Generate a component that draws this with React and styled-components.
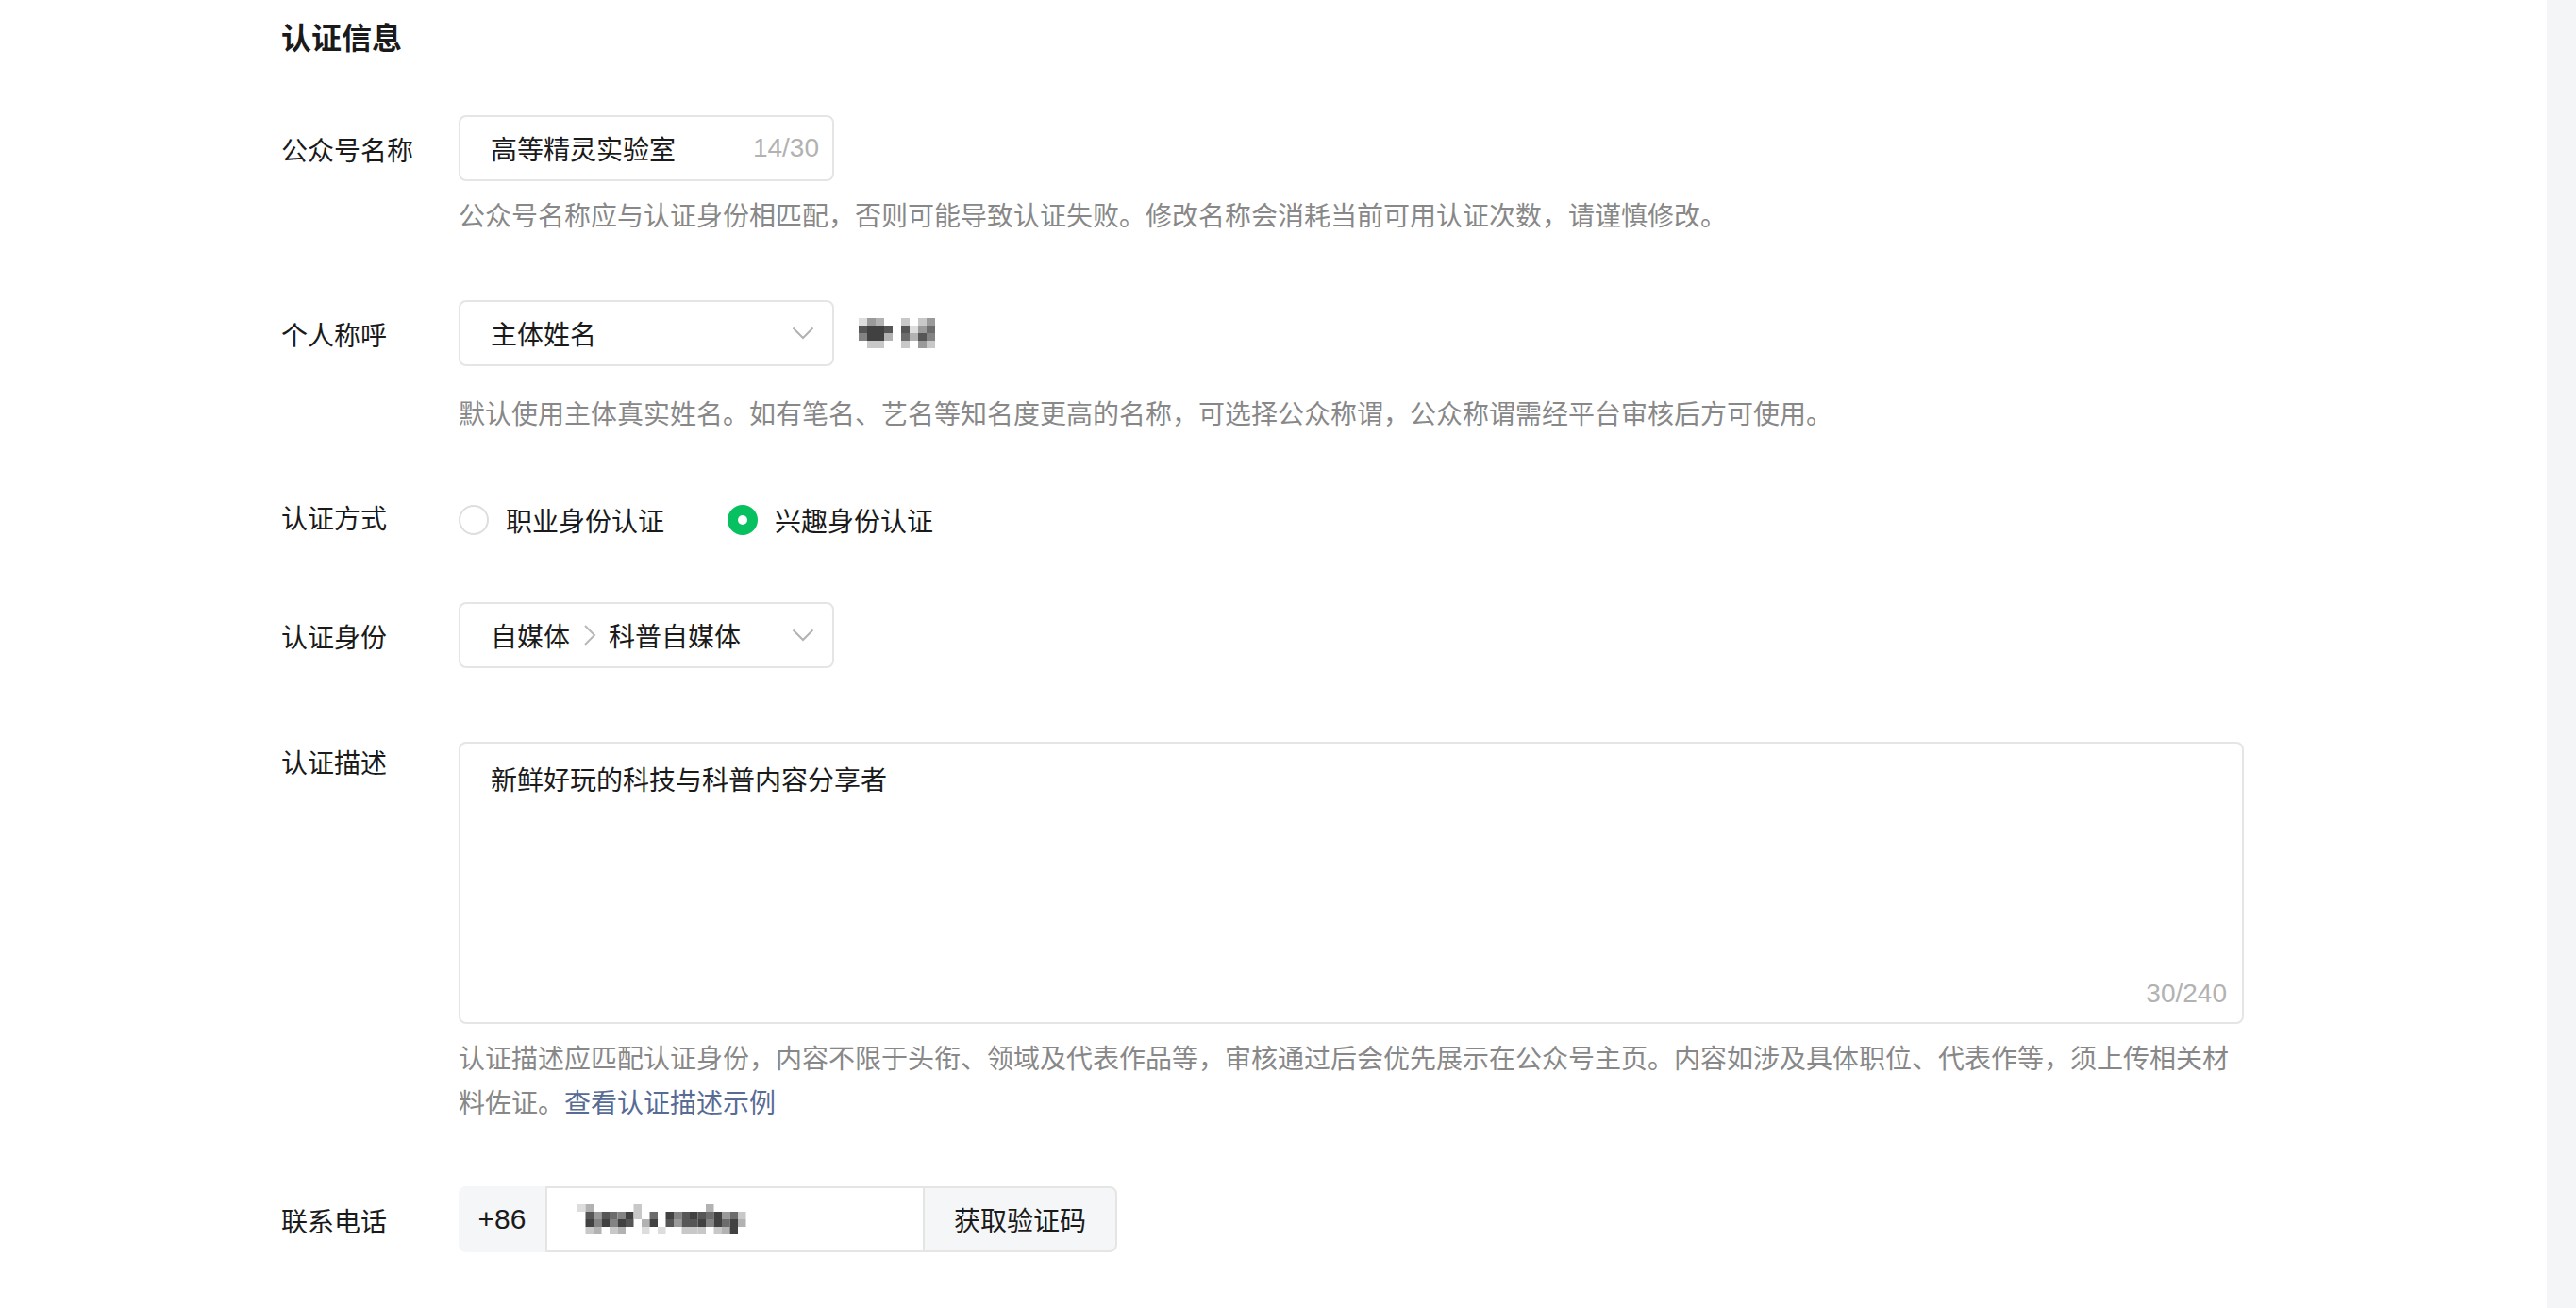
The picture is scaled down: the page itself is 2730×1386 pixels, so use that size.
import React from 'react';
import styled, { createGlobalStyle } from 'styled-components';

const GlobalStyle = createGlobalStyle`
  html, body {
    margin: 0;
    padding: 0;
    background: #fff;
  }
  body {
    font-family: "Liberation Sans", "Noto Sans CJK SC", sans-serif;
    color: #1a1a1a;
  }
  * {
    box-sizing: border-box;
  }
`;

const Shell = styled.div`
  display: flex;
  min-height: 100vh;
`;

const Main = styled.main`
  flex: 1;
  padding: 17px 0 40px 298px;
`;

const SideRail = styled.aside`
  width: 31px;
  background: #f4f5f7;
`;

const Title = styled.h2`
  margin: 0;
  font-size: 32px;
  line-height: 48px;
  font-weight: 700;
  color: #1a1a1a;
`;

const Row = styled.div`
  display: grid;
  grid-template-columns: 188px 1fr;
  align-items: start;
  margin-top: ${({ $gap }) => $gap}px;
`;

const Label = styled.div`
  font-size: 28px;
  line-height: ${({ $lh }) => $lh || 70}px;
  padding-top: ${({ $pt }) => ($pt === undefined ? 4 : $pt)}px;
  color: #1a1a1a;
  white-space: nowrap;
`;

const Field = styled.div`
  display: flex;
  flex-direction: column;
  align-items: flex-start;
`;

const Inline = styled.div`
  display: flex;
  align-items: center;
`;

const Hint = styled.p`
  margin: ${({ $mt }) => $mt}px 0 0;
  max-width: 1880px;
  font-size: 28px;
  line-height: 47px;
  color: #888;
`;

const HintLink = styled.a`
  color: #576b95;
  text-decoration: none;
  cursor: pointer;
`;

const InputBox = styled.div`
  display: flex;
  align-items: center;
  justify-content: space-between;
  width: 398px;
  height: 70px;
  padding: 0 ${({ $pr }) => $pr || 14}px 0 32px;
  border: 2px solid #e5e5e5;
  border-radius: 8px;
  background: #fff;
  font-size: 28px;
  color: #1a1a1a;
`;

const Counter = styled.span`
  font-size: 28px;
  line-height: 32px;
  color: #b2b2b2;
`;

const SelectValue = styled.span`
  display: flex;
  align-items: center;
`;

const Crumb = styled.svg`
  margin: 0 13px 0 14px;
`;

const RadioGroup = styled.div`
  display: flex;
  align-items: center;
  gap: 67px;
  height: 70px;
`;

const RadioOption = styled.label`
  display: flex;
  align-items: center;
  gap: 18px;
  font-size: 28px;
  color: #1a1a1a;
  cursor: pointer;
`;

const RadioDot = styled.span`
  display: flex;
  align-items: center;
  justify-content: center;
  width: 32px;
  height: 32px;
  border-radius: 50%;
  border: 2px solid ${({ $on }) => ($on ? '#07c160' : '#dedede')};
  background: ${({ $on }) => ($on ? '#07c160' : '#fff')};

  &::after {
    content: '';
    display: ${({ $on }) => ($on ? 'block' : 'none')};
    width: 10px;
    height: 10px;
    border-radius: 50%;
    background: #fff;
  }
`;

const TextArea = styled.div`
  display: flex;
  flex-direction: column;
  width: 1892px;
  height: 299px;
  padding: 19px 16px 14px 32px;
  border: 2px solid #e5e5e5;
  border-radius: 8px;
  background: #fff;
`;

const AreaText = styled.div`
  flex: 1;
  font-size: 28px;
  line-height: 42px;
  color: #1a1a1a;
`;

const AreaCounter = styled(Counter)`
  align-self: flex-end;
`;

const PhoneGroup = styled.div`
  display: flex;
  height: 70px;
`;

const Prefix = styled.div`
  display: flex;
  align-items: center;
  justify-content: center;
  width: 92px;
  background: #f5f6f7;
  border-radius: 8px 0 0 8px;
  font-size: 30px;
  color: #1a1a1a;
`;

const PhoneInput = styled.div`
  display: flex;
  align-items: center;
  width: 400px;
  padding-left: 32px;
  border: 2px solid #e5e5e5;
  border-right: none;
  background: #fff;
`;

const CodeButton = styled.button`
  width: 206px;
  padding: 0;
  border: 2px solid #e5e5e5;
  border-radius: 0 8px 8px 0;
  background: #f5f6f7;
  font-family: inherit;
  font-size: 28px;
  color: #1a1a1a;
  cursor: pointer;
`;

const MosaicWrap = styled.svg`
  display: block;
  margin-left: ${({ $ml }) => $ml || 0}px;
`;

const shades = ['none', '#eeeeee', '#dddddd', '#c8c8c8', '#b2b2b2', '#9a9a9a', '#838383', '#6c6c6c', '#565656', '#414141'];

const Mosaic = ({ rows, cw, ch, ml }) => {
  const w = rows[0].length * cw;
  const h = rows.length * ch;
  return (
    <MosaicWrap width={w} height={h} viewBox={`0 0 ${w} ${h}`} $ml={ml}>
      {rows.map((r, y) =>
        r.split('').map((c, x) =>
          c === '0' ? null : (
            <rect key={`${x}-${y}`} x={x * cw} y={y * ch} width={cw} height={ch} fill={shades[+c]} />
          )
        )
      )}
    </MosaicWrap>
  );
};

const Chevron = () => (
  <svg width="24" height="14" viewBox="0 0 24 14">
    <polyline points="1.5,1.5 12,12 22.5,1.5" fill="none" stroke="#b2b2b2" strokeWidth="2" />
  </svg>
);

const nameMosaic = [
  '2540030350',
  '8998082570',
  '6994074860',
  '0330030530',
];
const phoneMosaic = [
  '2400000300000000400000',
  '0858769307096898795730',
  '0969698049085889697940',
  '0340340020200333034900',
];

const App = () => {
  return (
    <Shell>
      <GlobalStyle />
      <Main>
        <Title>认证信息</Title>

        <Row $gap={57}>
          <Label>公众号名称</Label>
          <Field>
            <InputBox>
              <span>高等精灵实验室</span>
              <Counter>14/30</Counter>
            </InputBox>
            <Hint $mt={14}>公众号名称应与认证身份相匹配，否则可能导致认证失败。修改名称会消耗当前可用认证次数，请谨慎修改。</Hint>
          </Field>
        </Row>

        <Row $gap={65}>
          <Label>个人称呼</Label>
          <Field>
            <Inline>
              <InputBox $pr={19}>
                <span>主体姓名</span>
                <Chevron />
              </InputBox>
              <Mosaic rows={nameMosaic} cw={9} ch={8} ml={26} />
            </Inline>
            <Hint $mt={28}>默认使用主体真实姓名。如有笔名、艺名等知名度更高的名称，可选择公众称谓，公众称谓需经平台审核后方可使用。</Hint>
          </Field>
        </Row>

        <Row $gap={53}>
          <Label $pt={0}>认证方式</Label>
          <RadioGroup>
            <RadioOption>
              <RadioDot />
              职业身份认证
            </RadioOption>
            <RadioOption>
              <RadioDot $on />
              兴趣身份认证
            </RadioOption>
          </RadioGroup>
        </Row>

        <Row $gap={52}>
          <Label>认证身份</Label>
          <InputBox $pr={19}>
            <SelectValue>
              自媒体
              <Crumb width="14" height="22" viewBox="0 0 14 22">
                <polyline points="2,1 12,11 2,21" fill="none" stroke="#b8b8b8" strokeWidth="2" />
              </Crumb>
              科普自媒体
            </SelectValue>
            <Chevron />
          </InputBox>
        </Row>

        <Row $gap={74}>
          <Label $lh={40} $pt={4}>认证描述</Label>
          <Field>
            <TextArea>
              <AreaText>新鲜好玩的科技与科普内容分享者</AreaText>
              <AreaCounter>30/240</AreaCounter>
            </TextArea>
            <Hint $mt={14}>
              认证描述应匹配认证身份，内容不限于头衔、领域及代表作品等，审核通过后会优先展示在公众号主页。内容如涉及具体职位、代表作等，须上传相关材料佐证。
              <HintLink>查看认证描述示例</HintLink>
            </Hint>
          </Field>
        </Row>

        <Row $gap={64}>
          <Label>联系电话</Label>
          <PhoneGroup>
            <Prefix>+86</Prefix>
            <PhoneInput>
              <Mosaic rows={phoneMosaic} cw={8.5} ch={8} />
            </PhoneInput>
            <CodeButton>获取验证码</CodeButton>
          </PhoneGroup>
        </Row>
      </Main>
      <SideRail />
    </Shell>
  );
};

export default App;
